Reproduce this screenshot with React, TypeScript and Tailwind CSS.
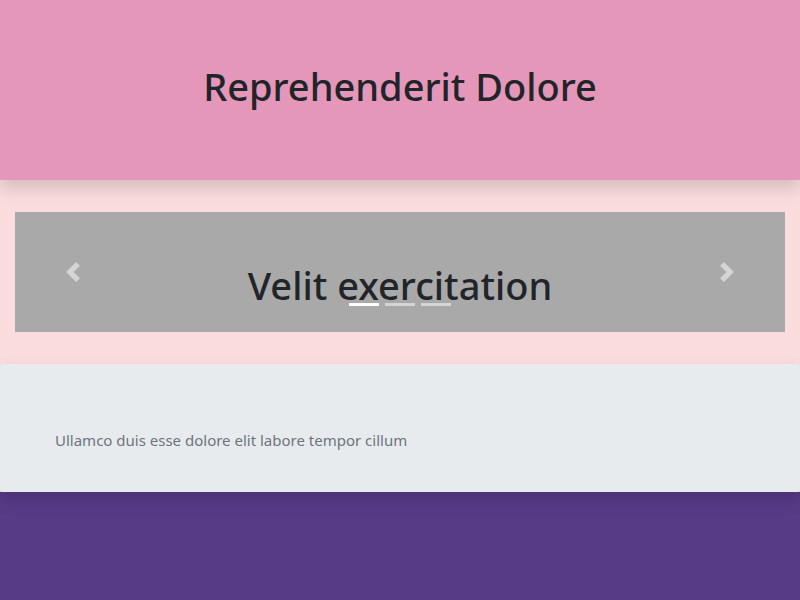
const font = { fontFamily: '"Noto Sans", "Open Sans", sans-serif' };

function Chevron({ dir }: { dir: "prev" | "next" }) {
  return (
    <svg viewBox="0 0 8 8" className="w-5 h-5" fill="#fff">
      {dir === "prev" ? (
        <path d="M5.25 0l-4 4 4 4 1.5-1.5-2.5-2.5 2.5-2.5-1.5-1.5z" />
      ) : (
        <path d="M2.75 0l-1.5 1.5 2.5 2.5-2.5 2.5 1.5 1.5 4-4-4-4z" />
      )}
    </svg>
  );
}

export default function App() {
  return (
    <div className="min-h-[600px] flex flex-col bg-[#f9dcdb]" style={font}>
      <header className="relative z-10 h-[180px] bg-[#e597b9] flex items-center justify-center shadow-[0_8px_16px_rgba(0,0,0,0.15)]">
        <h1 className="text-[38px] leading-[1.2] font-medium text-[#212529] mb-[6px]">Reprehenderit Dolore</h1>
      </header>

      <section className="px-[15px] py-8">
        <div className="relative h-[120px] bg-[#a9a9a9] flex items-center justify-center">
          <h1 className="text-[38px] leading-[1.2] font-medium text-[#212529] mt-7">Velit exercitation</h1>
          <button className="absolute left-0 top-0 bottom-0 w-[15%] flex items-center justify-center opacity-50">
            <Chevron dir="prev" />
          </button>
          <button className="absolute right-0 top-0 bottom-0 w-[15%] flex items-center justify-center opacity-50">
            <Chevron dir="next" />
          </button>
          <ol className="absolute bottom-[26px] left-0 right-0 flex justify-center gap-[6px]">
            <li className="w-[30px] h-[3px] bg-white" />
            <li className="w-[30px] h-[3px] bg-white/50" />
            <li className="w-[30px] h-[3px] bg-white/50" />
          </ol>
        </div>
      </section>

      <div className="relative z-10 h-[128px] bg-[#e8ebee] rounded shadow-[0_8px_16px_rgba(0,0,0,0.15)] pt-16 px-[55px]">
        <p className="text-[15px] leading-6 text-[#6c757d]">Ullamco duis esse dolore elit labore tempor cillum</p>
      </div>

      <footer className="flex-1 bg-[#573b87]" />
    </div>
  );
}
